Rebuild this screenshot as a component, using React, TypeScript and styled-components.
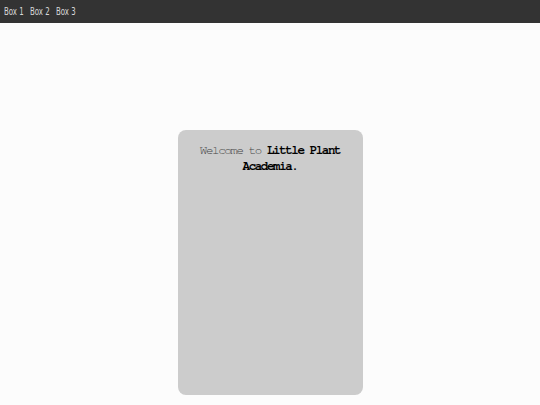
import styled, { createGlobalStyle } from 'styled-components';

const GlobalStyle = createGlobalStyle`
	html, body {
		margin: 0;
		padding: 0;
		background: #fcfcfc;
	}
`;

const Page = styled.div`
	min-height: 405px;
	display: flex;
	flex-direction: column;
`;

const Nav = styled.nav`
	height: 23px;
	background: #333333;
	display: flex;
	align-items: center;
	padding: 0 4px;
	box-sizing: border-box;
`;

const NavLink = styled.a`
	display: inline-block;
	margin-right: -2px;
	font-family: 'DejaVu Sans', sans-serif;
	font-size: 10px;
	white-space: nowrap;
	color: #d8d8d8;
	text-decoration: none;
	transform: scaleX(0.7);
	transform-origin: left center;
`;

const Main = styled.main`
	flex: 1;
	display: flex;
	justify-content: center;
	padding-top: 107px;
`;

const Card = styled.section`
	width: 185px;
	height: 265px;
	background: #cccccc;
	border-radius: 8px;
	box-sizing: border-box;
	padding: 13px 12px;
	text-align: center;
	font-family: FreeMono, 'Liberation Mono', monospace;
	font-size: 12.5px;
	letter-spacing: -1.4px;
	line-height: 16px;
	color: #000;
`;

const Muted = styled.span`
	color: #444444;
`;

export default function App() {
	return (
		<>
			<GlobalStyle />
			<Page>
				<Nav>
					<NavLink href="#">Box 1</NavLink>
					<NavLink href="#">Box 2</NavLink>
					<NavLink href="#">Box 3</NavLink>
				</Nav>
				<Main>
					<Card>
						<Muted>Welcome to </Muted>
						<b>Little Plant Academia</b>.
					</Card>
				</Main>
			</Page>
		</>
	);
}
